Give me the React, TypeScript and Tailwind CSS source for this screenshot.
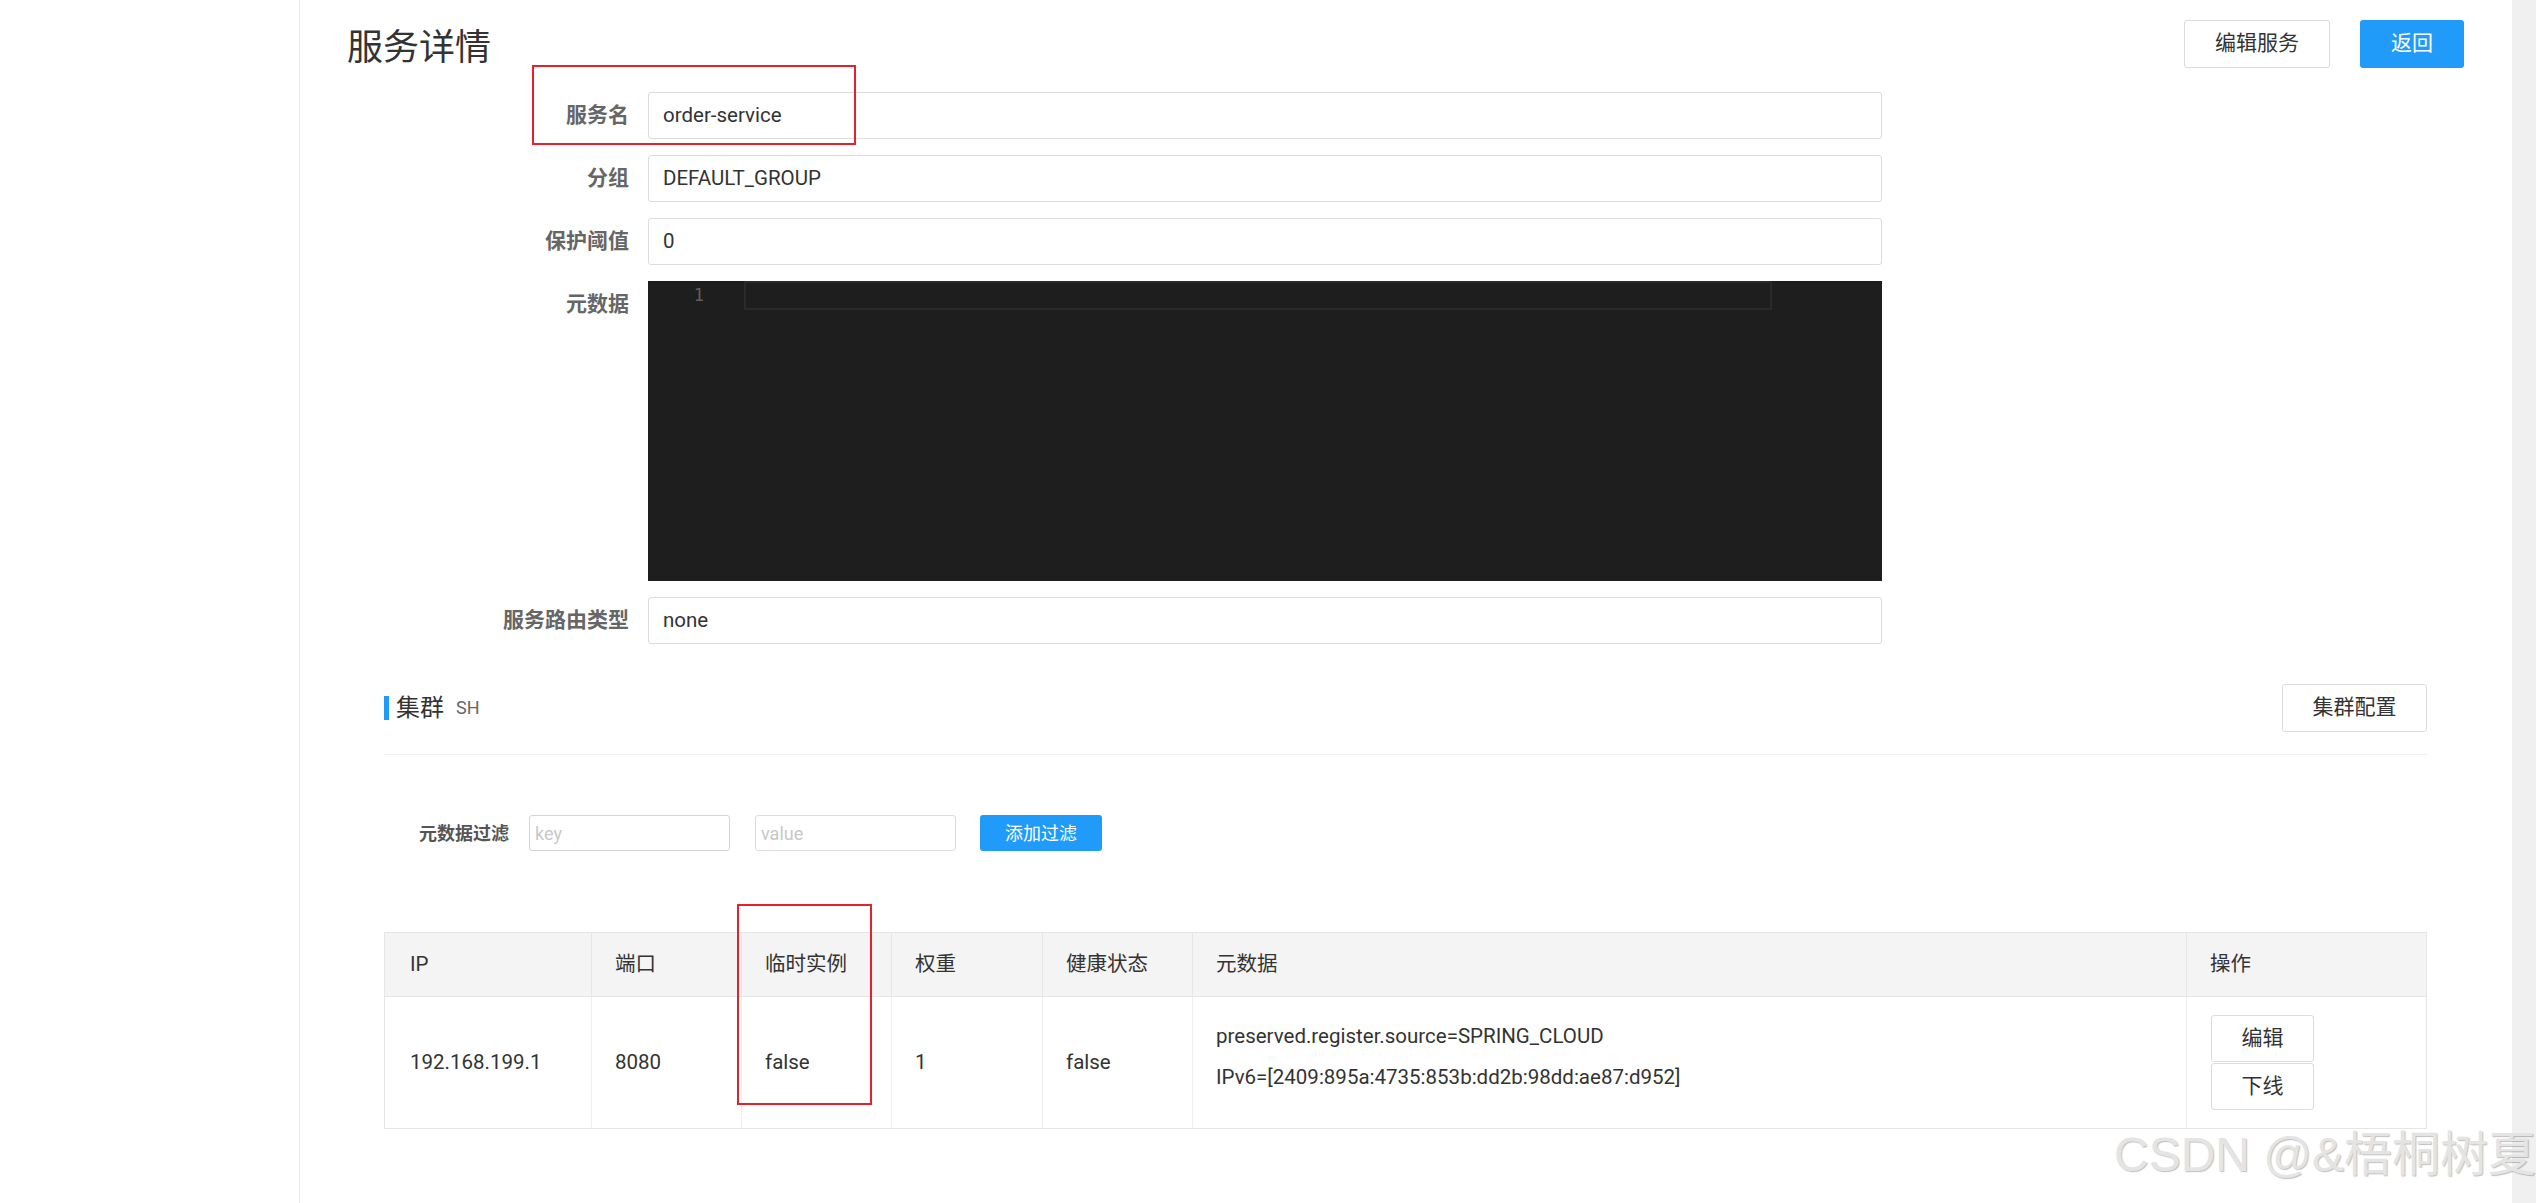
import React from "react";

const font = "font-['Roboto','Noto_Sans_CJK_SC',sans-serif]";

const FormRow = ({ label, children }: { label: string; children: React.ReactNode }) => (
  <div className="flex items-start">
    <div className="w-[245px] h-[47px] flex items-center justify-end text-[21px] font-bold text-[#666]">
      {label}
    </div>
    <div className="ml-[19px]">{children}</div>
  </div>
);

const TextBox = ({ value }: { value: string }) => (
  <div className="w-[1234px] h-[47px] border border-[#dcdcdc] rounded-[3px] px-[14px] flex items-center text-[20.5px] text-[#333]">
    {value}
  </div>
);

const cols = [
  { title: "IP", w: "w-[206px]" },
  { title: "端口", w: "w-[150px]" },
  { title: "临时实例", w: "w-[150px]" },
  { title: "权重", w: "w-[151px]" },
  { title: "健康状态", w: "w-[150px]" },
  { title: "元数据", w: "w-[994px]" },
  { title: "操作", w: "w-[240px]" },
];

export default function App() {
  return (
    <div className={`relative flex h-[1203px] w-full overflow-hidden bg-white ${font}`}>
      <aside className="w-[300px] shrink-0 border-r border-[#e8e8e8]" />

      <main className="flex-1 pt-[19px] pl-[47px] pr-[48px]">
        <div className="flex h-[49px] items-center justify-between">
          <h1 className="pt-[9px] text-[36px] leading-none text-[#333]">服务详情</h1>
          <div className="flex items-center gap-[30px]">
            <button className="w-[146px] h-[48px] border border-[#dcdcdc] rounded-[3px] bg-white text-[21px] text-[#333]">
              编辑服务
            </button>
            <button className="w-[104px] h-[48px] rounded-[3px] bg-[#209bfa] text-[21px] text-white">返回</button>
          </div>
        </div>

        <div className="ml-[37px] mr-[37px]">
          {/* form */}
          <div className="mt-[24px] flex flex-col gap-[16px]">
            <FormRow label="服务名">
              <TextBox value="order-service" />
            </FormRow>
            <FormRow label="分组">
              <TextBox value="DEFAULT_GROUP" />
            </FormRow>
            <FormRow label="保护阈值">
              <TextBox value="0" />
            </FormRow>
            <FormRow label="元数据">
              <div className="w-[1234px] h-[300px] bg-[#1e1e1e] flex items-start">
                <div className="w-[96px] pr-[40px] text-right font-['DejaVu_Sans_Mono',monospace] text-[17px] leading-[29px] text-[#5f5f5f]">
                  1
                </div>
                <div className="w-[1028px] h-[29px] border-2 border-[#2a2a2a]" />
              </div>
            </FormRow>
            <FormRow label="服务路由类型">
              <TextBox value="none" />
            </FormRow>
          </div>

          {/* cluster */}
          <div className="mt-[40px] flex items-center justify-between border-b border-[#eeeeee] pb-[22px]">
            <div className="flex items-center">
              <span className="w-[5px] h-[24px] bg-[#209bfa]" />
              <span className="ml-[7px] text-[24px] leading-none text-[#333]">集群</span>
              <span className="ml-[12px] text-[18px] leading-none text-[#666]">SH</span>
            </div>
            <button className="w-[145px] h-[48px] border border-[#dcdcdc] rounded-[3px] bg-white text-[21px] text-[#333]">
              集群配置
            </button>
          </div>

          {/* filter */}
          <div className="mt-[60px] flex items-center pl-[35px]">
            <span className="text-[18px] font-bold text-[#555]">元数据过滤</span>
            <div className="ml-[20px] w-[201px] h-[36px] border border-[#d4d4d4] rounded-[3px] px-[5px] flex items-center text-[18px] text-[#c8c8c8]">
              key
            </div>
            <div className="ml-[25px] w-[201px] h-[36px] border border-[#dcdcdc] rounded-[3px] px-[5px] flex items-center text-[18px] text-[#c8c8c8]">
              value
            </div>
            <button className="ml-[24px] w-[122px] h-[36px] rounded-[3px] bg-[#209bfa] text-[18px] text-white">
              添加过滤
            </button>
          </div>

          {/* instances table */}
          <div className="mt-[81px] w-fit border border-[#e6e6e6] text-[20.5px] text-[#333]">
            <div className="flex h-[64px] bg-[#f4f4f4] border-b border-[#e6e6e6]">
              {cols.map((c, i) => (
                <div
                  key={c.title}
                  className={`${c.w} ${i > 0 ? "border-l border-[#e6e6e6] pl-[23px]" : "pl-[25px]"} flex items-center`}
                >
                  {c.title}
                </div>
              ))}
            </div>
            <div className="flex h-[131px]">
              <div className={`${cols[0].w} flex items-center pl-[25px]`}>192.168.199.1</div>
              <div className={`${cols[1].w} border-l border-[#eeeeee] flex items-center pl-[23px]`}>8080</div>
              <div className={`${cols[2].w} border-l border-[#eeeeee] flex items-center pl-[23px]`}>false</div>
              <div className={`${cols[3].w} border-l border-[#eeeeee] flex items-center pl-[23px]`}>1</div>
              <div className={`${cols[4].w} border-l border-[#eeeeee] flex items-center pl-[23px]`}>false</div>
              <div className={`${cols[5].w} border-l border-[#eeeeee] flex items-center pl-[23px]`}>
                <div className="pb-[11px] leading-[41px]">
                  <div>preserved.register.source=SPRING_CLOUD</div>
                  <div>IPv6=[2409:895a:4735:853b:dd2b:98dd:ae87:d952]</div>
                </div>
              </div>
              <div className={`${cols[6].w} border-l border-[#eeeeee] flex items-center pl-[24px]`}>
                <div className="flex flex-col gap-px text-[21px]">
                  <button className="w-[103px] h-[47px] border border-[#dcdcdc] rounded-[3px] bg-white">编辑</button>
                  <button className="w-[103px] h-[47px] border border-[#dcdcdc] rounded-[3px] bg-white">下线</button>
                </div>
              </div>
            </div>
          </div>
        </div>
      </main>

      <div className="w-[25px] shrink-0 bg-[#f0f0f0]" />

      {/* screenshot annotations */}
      <div className="absolute left-[532px] top-[65px] w-[324px] h-[80px] border-2 border-[#e8202a]" />
      <div className="absolute left-[737px] top-[904px] w-[135px] h-[201px] border-2 border-[#e8202a]" />
      <div className="absolute left-[2114px] top-[1131px] whitespace-nowrap font-['Liberation_Sans','Noto_Sans_CJK_SC',sans-serif] text-[48px] leading-none text-[#e4e4e4] [text-shadow:1px_1px_1px_rgba(0,0,0,0.25)]">
        CSDN @&amp;梧桐树夏
      </div>
    </div>
  );
}
